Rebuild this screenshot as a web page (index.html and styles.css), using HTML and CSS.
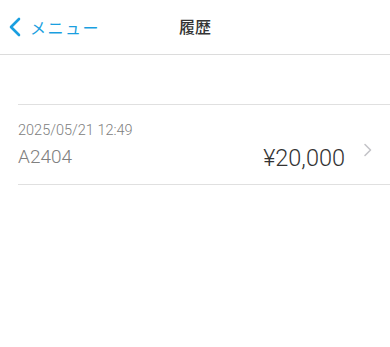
FILE: index.html
```html
<!DOCTYPE html>
<html lang="ja">
<head>
<meta charset="utf-8">
<link rel="stylesheet" href="styles.css">
</head>
<body>
<header class="nav">
  <a class="back">
    <svg class="back-icon" width="14" height="20" viewBox="0 0 14 20"><path d="M11 2 L3 10 L11 18" fill="none" stroke="#1a9fe0" stroke-width="2.6" stroke-linecap="round" stroke-linejoin="round"/></svg>
    <span class="back-text">メニュー</span>
  </a>
  <h1 class="title">履歴</h1>
</header>
<main class="list">
  <div class="row">
    <div class="info">
      <div class="date">2025/05/21 12:49</div>
      <div class="code">A2404</div>
    </div>
    <div class="amount">¥20,000</div>
    <svg class="chev" width="10" height="14" viewBox="0 0 10 14"><path d="M2 1.5 L7.5 7 L2 12.5" fill="none" stroke="#c4c4c8" stroke-width="1.6" stroke-linecap="round" stroke-linejoin="round"/></svg>
  </div>
</main>
</body>
</html>
```
FILE: styles.css
```css
* { box-sizing: border-box; }
body {
  margin: 0;
  background: #fff;
  font-family: "Noto Sans CJK JP", "Noto Sans", sans-serif;
  width: 390px;
  height: 347px;
  overflow: hidden;
}
.nav {
  position: relative;
  height: 55px;
  border-bottom: 1px solid #dcdcdc;
  display: flex;
  align-items: center;
  justify-content: center;
}
.back {
  position: absolute;
  left: 8px;
  top: 0;
  height: 54px;
  display: flex;
  align-items: center;
  gap: 8px;
  color: #1a9fe0;
}
.back-icon { display: block; margin-top: -1px; }
.back-text {
  font-size: 16px;
  letter-spacing: 1.5px;
  margin-top: -1px;
}
.title {
  margin: 0;
  font-size: 16px;
  font-weight: 500;
  color: #333;
  margin-top: -3px;
}
.list {
  margin-top: 49px;
  margin-left: 18px;
  border-top: 1px solid #e0e0e0;
}
.row {
  height: 80px;
  border-bottom: 1px solid #e0e0e0;
  display: flex;
  align-items: flex-start;
  padding-top: 16px;
}
.info { flex: 1; }
.date {
  font-family: "Roboto", "Liberation Sans", sans-serif;
  font-size: 14.5px;
  font-weight: 300;
  color: #808080;
  line-height: 20px;
}
.code {
  font-family: "Roboto", "Liberation Sans", sans-serif;
  font-size: 19px;
  font-weight: 300;
  color: #808080;
  line-height: 24px;
  margin-top: 4px;
}
.amount {
  font-family: "Roboto", "Liberation Sans", sans-serif;
  font-size: 23.5px;
  font-weight: 300;
  color: #333;
  margin-top: 24px;
  line-height: 26px;
}
.chev {
  display: block;
  margin-left: 18px;
  margin-right: 17px;
  margin-top: 22px;
}
```
